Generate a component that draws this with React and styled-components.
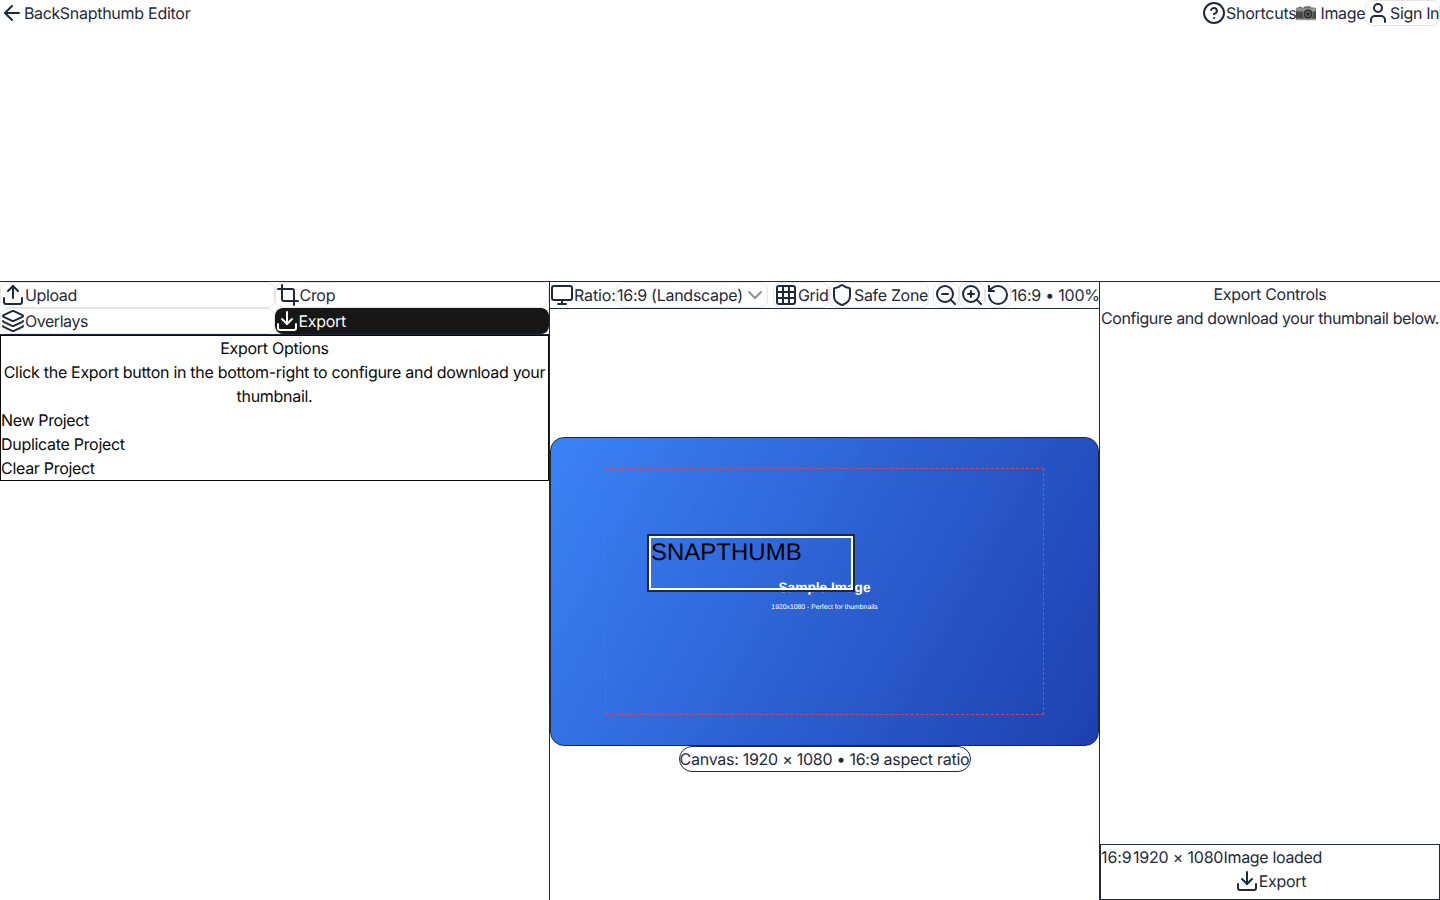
import React from "react";
import styled, { createGlobalStyle } from "styled-components";
import {
  ArrowLeft, CircleHelp, User, Upload, Crop, Layers, Download, Monitor,
  ChevronDown, Grid3x3, Shield, ZoomOut, ZoomIn, RotateCcw,
} from "lucide-react";

const ink = "#1e293b";
const line = "#e5e5e5";

const GlobalStyle = createGlobalStyle`
  *, *::before, *::after { box-sizing: border-box; }
  body { margin: 0; background: #fff; }
  svg { display: block; flex: none; }
`;

const Page = styled.div`
  width: 100%;
  height: 900px;
  display: grid;
  grid-template-rows: 281px 619px;
  overflow: hidden;
  font-family: Inter, "Liberation Sans", sans-serif;
  font-size: 16px;
  line-height: 24px;
  letter-spacing: -0.27px;
  text-rendering: geometricPrecision;
  color: ${ink};
`;

const Header = styled.header`
  display: flex;
  justify-content: space-between;
  align-items: flex-start;
`;

const HeaderGroup = styled.div`
  display: flex;
  align-items: center;
  height: 26px;
`;

const Label = styled.span`
  display: block;
  flex: none;
  width: ${(p) => (p.$w ? `${p.$w}px` : "auto")};
  letter-spacing: ${(p) => p.$ls ?? -0.27}px;
  white-space: nowrap;
`;

const OutlineButton = styled.div`
  display: flex;
  align-items: center;
  flex: none;
  height: 26px;
  width: ${(p) => (p.$w ? `${p.$w}px` : "auto")};
  margin-left: ${(p) => p.$gap ?? 0}px;
  border: 1px solid ${line};
  border-radius: 8px;
`;

const Emoji = styled.span`
  width: 20px;
  margin-right: 4.5px;
  flex: none;
`;

const Workspace = styled.main`
  display: grid;
  grid-template-columns: 550px 550px 340px;
  border-top: 1px solid ${ink};
`;

const Sidebar = styled.aside`
  border-right: 1px solid ${ink};
`;

const Tabs = styled.nav`
  display: grid;
  grid-template-columns: 1fr 1fr;
  grid-auto-rows: 26px;
  border-bottom: 1px solid ${ink};
`;

const Tab = styled.div`
  display: flex;
  align-items: center;
  border: ${(p) => (p.$active ? "0" : `1px solid ${line}`)};
  border-radius: 8px;
  background: ${(p) => (p.$active ? "#171717" : "#fff")};
  color: ${(p) => (p.$active ? "#fafafa" : ink)};
`;

const OptionsCard = styled.section`
  border: 1px solid #0a0a0a;
  color: #0a0a0a;
`;

const Line = styled.div`
  text-align: ${(p) => (p.$center ? "center" : "left")};
  letter-spacing: ${(p) => p.$ls ?? -0.27}px;
  white-space: nowrap;
`;

const Center = styled.section`
  display: flex;
  flex-direction: column;
  border-right: 1px solid ${ink};
`;

const Toolbar = styled.div`
  display: flex;
  align-items: center;
  height: 27px;
  border-bottom: 1px solid ${ink};
`;

const Stage = styled.div`
  flex: 1;
  display: flex;
  flex-direction: column;
  align-items: center;
  justify-content: center;
`;

const Canvas = styled.div`
  position: relative;
  width: 549px;
  height: 309px;
  border: 1px solid ${ink};
  border-radius: 14px;
  overflow: hidden;
  background: linear-gradient(119.36deg, #3b82f6, #1e40af);
  font-family: "Liberation Sans", Arial, sans-serif;
  letter-spacing: 0;
`;

const SafeZone = styled.div`
  position: absolute;
  inset: 30px 54px;
  border: 1px dashed rgba(239, 68, 68, 0.85);
`;

const Caption = styled.div`
  position: absolute;
  left: 0;
  right: 0;
  top: ${(p) => p.$top}px;
  text-align: center;
  color: #fff;
  font-size: ${(p) => p.$size}px;
  font-weight: ${(p) => p.$weight ?? 400};
  line-height: 16px;
`;

const TextOverlay = styled.div`
  position: absolute;
  left: 96px;
  top: 96px;
  width: 208px;
  height: 58px;
  border: 2px solid ${ink};
  box-shadow: inset 0 0 0 2px #fff;
  padding: 3px 2px;
  color: #000;
  font-size: 24px;
  line-height: 28px;
`;

const Pill = styled.div`
  height: 26px;
  width: 292px;
  display: flex;
  justify-content: center;
  border: 1px solid ${ink};
  border-radius: 13px;
  white-space: nowrap;
`;

const ExportPanel = styled.aside`
  display: flex;
  flex-direction: column;
  justify-content: space-between;
`;

const ExportFooter = styled.div`
  height: 56px;
  border: 1px solid ${ink};
`;

const StatusRow = styled.div`
  display: flex;
`;

const ExportAction = styled.div`
  display: flex;
  justify-content: center;
  align-items: center;
  padding-left: 1px;
`;

function Camera() {
  return (
    <svg width="20" height="16" viewBox="0 0 20 16">
      <rect x="2.5" y="1.8" width="3" height="1.6" rx=".5" fill="#666" />
      <path d="M7.5 3.2 8.8 1.2h5.4L15.6 3.2z" fill="#6b6b6b" />
      <rect x="0" y="2.8" width="20" height="12.2" rx="1.2" fill="#474747" />
      <rect x="0" y="2.8" width="20" height="3.6" rx="1" fill="#8a8a8a" />
      <rect x="0" y="13.4" width="20" height="1.8" rx=".6" fill="#9a9a9a" />
      <circle cx="12" cy="9" r="5.4" fill="#8a8a8a" />
      <circle cx="12" cy="9" r="4.5" fill="#2b2b2b" />
      <circle cx="12" cy="9" r="3" fill="#66696c" />
      <circle cx="12" cy="9" r="1.7" fill="#292929" />
      <circle cx="17.6" cy="5" r=".9" fill="#e5b83f" />
    </svg>
  );
}

export default function App() {
  return (
    <>
      <GlobalStyle />
      <Page>
        <Header>
          <HeaderGroup>
            <ArrowLeft />
            <Label $ls={-0.4}>Back</Label>
            <Label>Snapthumb Editor</Label>
          </HeaderGroup>
          <HeaderGroup>
            <CircleHelp />
            <Label $w={70}>Shortcuts</Label>
            <Emoji><Camera /></Emoji>
            <Label $w={44.5} $ls={-0.35}>Image</Label>
            <OutlineButton $w={75}>
              <User />
              <Label $ls={-0.35}>Sign In</Label>
            </OutlineButton>
          </HeaderGroup>
        </Header>
        <Workspace>
          <Sidebar>
            <Tabs>
              <Tab><Upload /><Label $ls={-0.38}>Upload</Label></Tab>
              <Tab><Crop /><Label $ls={-0.3}>Crop</Label></Tab>
              <Tab><Layers /><Label $ls={-0.46}>Overlays</Label></Tab>
              <Tab $active><Download /><Label $ls={-0.3}>Export</Label></Tab>
            </Tabs>
            <OptionsCard>
              <Line $center>Export Options</Line>
              <Line $center $ls={-0.3}>
                Click the Export button in the bottom-right to configure and download your
                <br />
                thumbnail.
              </Line>
              <Line $ls={-0.35}>New Project</Line>
              <Line $ls={-0.3}>Duplicate Project</Line>
              <Line $ls={-0.3}>Clear Project</Line>
            </OptionsCard>
          </Sidebar>
          <Center>
            <Toolbar>
              <Monitor />
              <Label $w={42} $ls={-0.15}>Ratio:</Label>
              <OutlineButton $w={152}>
                <Label $w={126}>16:9 (Landscape)</Label>
                <ChevronDown opacity={0.5} />
              </OutlineButton>
              <OutlineButton $w={56} $gap={5}><Grid3x3 /><Label $ls={-0.4}>Grid</Label></OutlineButton>
              <OutlineButton $w={100}><Shield /><Label $ls={-0.33}>Safe Zone</Label></OutlineButton>
              <OutlineButton $w={26} $gap={4}><ZoomOut /></OutlineButton>
              <OutlineButton $w={26}><ZoomIn /></OutlineButton>
              <OutlineButton $w={26}><RotateCcw /></OutlineButton>
              <Label $w={88} $ls={-0.24}>16:9 • 100%</Label>
            </Toolbar>
            <Stage>
              <Canvas>
                <Caption $top={141.5} $size={13.7} $weight={700}>Sample Image</Caption>
                <Caption $top={162} $size={6.84}>1920x1080 - Perfect for thumbnails</Caption>
                <SafeZone />
                <TextOverlay>SNAPTHUMB</TextOverlay>
              </Canvas>
              <Pill>Canvas: 1920 × 1080 • 16:9 aspect ratio</Pill>
            </Stage>
          </Center>
          <ExportPanel>
            <div>
              <Line $center $ls={-0.3}>Export Controls</Line>
              <Line $center $ls={-0.42}>Configure and download your thumbnail below.</Line>
            </div>
            <ExportFooter>
              <StatusRow>
                <Label $w={32} $ls={-0.1}>16:9</Label>
                <Label $w={90.5} $ls={-0.2}>1920 × 1080</Label>
                <Label $ls={-0.33}>Image loaded</Label>
              </StatusRow>
              <ExportAction><Download /><Label $ls={-0.3}>Export</Label></ExportAction>
            </ExportFooter>
          </ExportPanel>
        </Workspace>
      </Page>
    </>
  );
}
